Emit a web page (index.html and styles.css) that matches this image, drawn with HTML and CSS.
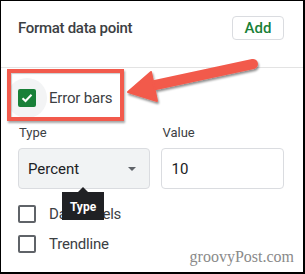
FILE: index.html
```html
<!DOCTYPE html>
<html lang="en">
<head>
    <meta charset="UTF-8">
    <meta name="viewport" content="width=device-width, initial-scale=1.0">
    <title>Format data point</title>
    <link rel="stylesheet" href="styles.css">
</head>
<body>

    <div class="frame">
        <div class="header">
            <span class="title">Format data point</span>
            <button class="add-btn">Add</button>
        </div>
        <div class="divider"></div>

        <div class="panel">
            <label class="check-row first">
                <span class="ripple"></span>
                <span class="box checked">
                    <svg width="12" height="10" viewBox="0 0 12 10"><path d="M1.5 5.2 L4.5 8 L10.5 1.8" fill="none" stroke="#fff" stroke-width="2"/></svg>
                </span>
                <span class="check-text">Error bars</span>
            </label>

            <div class="fields">
                <div class="field">
                    <div class="field-label">Type</div>
                    <div class="select">
                        <span>Percent</span>
                        <span class="caret"></span>
                    </div>
                </div>
                <div class="field value">
                    <div class="field-label">Value</div>
                    <div class="input">10</div>
                </div>
            </div>

            <label class="check-row labels">
                <span class="box"></span>
                <span class="check-text">Data labels</span>
            </label>
            <label class="check-row trend">
                <span class="box"></span>
                <span class="check-text">Trendline</span>
            </label>
        </div>

        <!-- overlays: tooltip, red highlight and arrow -->
        <div class="tooltip">Type</div>
        <div class="highlight"></div>
        <svg class="arrow" width="305" height="274" viewBox="0 0 305 274">
            <defs>
                <filter id="shadow" x="-20%" y="-40%" width="140%" height="180%">
                    <feDropShadow dx="1" dy="2" stdDeviation="1.2" flood-color="#000" flood-opacity="0.45"/>
                </filter>
            </defs>
            <g filter="url(#shadow)" fill="#f25a4c" stroke="#f25a4c">
                <line x1="253" y1="64" x2="146" y2="87" stroke-width="10" stroke-linecap="round"/>
                <polygon points="128,92 151,72 157,101" stroke-width="2" stroke-linejoin="round"/>
            </g>
        </svg>
        <div class="watermark">groovyPost.com</div>
    </div>

</body>
</html>
```

FILE: styles.css
```css
body {
    margin: 0;
    background-color: white;
    font-family: Roboto, "Liberation Sans", Arial, sans-serif;
}

.frame {
    position: relative;
    width: 305px;
    height: 274px;
    box-sizing: border-box;
    border-style: solid;
    border-color: #000;
    border-width: 1px 2px 2px 1px;
    overflow: hidden;
}

.header {
    display: flex;
    align-items: center;
    justify-content: space-between;
    height: 54px;
    padding: 0 19px 0 17px;
}

.title {
    font-size: 15px;
    font-weight: 500;
    letter-spacing: -0.3px;
    color: #3c4043;
}

.add-btn {
    width: 52px;
    height: 24px;
    padding: 0;
    background-color: white;
    border: 1px solid #dadce0;
    border-radius: 4px;
    color: #188038;
    font-family: inherit;
    font-size: 15px;
    font-weight: 500;
}

.divider {
    margin-top: 12px;
    height: 1px;
    background-color: #e3e3e3;
}

.panel {
    padding: 0 19px 0 17px;
}

.check-row {
    position: relative;
    display: flex;
    align-items: center;
    height: 18px;
    gap: 13px;
}

.check-row.first {
    margin-top: 21px;
}

.check-row.labels {
    margin-top: 16px;
}

.check-row.trend {
    margin-top: 12px;
}

.ripple {
    position: absolute;
    left: -11px;
    top: -11px;
    width: 40px;
    height: 40px;
    border-radius: 50%;
    background-color: #f3f4f5;
}

.box {
    position: relative;
    display: flex;
    align-items: center;
    justify-content: center;
    width: 18px;
    height: 18px;
    box-sizing: border-box;
    border: 2px solid #5f6368;
    border-radius: 2px;
}

.box.checked {
    background-color: #188038;
    border-color: #188038;
}

.check-text {
    position: relative;
    font-size: 15px;
    letter-spacing: -0.2px;
    color: #3c4043;
}

.fields {
    display: flex;
    gap: 11px;
    margin-top: 18px;
}

.field {
    width: 133px;
}

.field.value {
    width: 123px;
}

.field-label {
    font-size: 13px;
    line-height: 16px;
    color: #3c4043;
    padding-left: 1px;
}

.select,
.input {
    display: flex;
    align-items: center;
    justify-content: space-between;
    height: 41px;
    margin-top: 7px;
    box-sizing: border-box;
    border: 1px solid #dadce0;
    border-radius: 4px;
    padding: 0 13px 0 9px;
    font-size: 15px;
    color: #202124;
}

.select {
    background-color: #f1f3f4;
}

.caret {
    width: 0;
    height: 0;
    border-left: 4px solid transparent;
    border-right: 4px solid transparent;
    border-top: 4px solid #5f6368;
}

.tooltip {
    position: absolute;
    left: 61px;
    top: 191px;
    width: 42px;
    height: 28px;
    padding-top: 8px;
    box-sizing: border-box;
    background-color: #202124;
    color: white;
    font-size: 12px;
    font-weight: 700;
    line-height: 14px;
    text-align: center;
}

.tooltip::before {
    content: "";
    position: absolute;
    left: 16px;
    top: -5px;
    border-left: 5px solid transparent;
    border-right: 5px solid transparent;
    border-bottom: 5px solid #202124;
}

.highlight {
    position: absolute;
    left: 6px;
    top: 68px;
    width: 117px;
    height: 52px;
    box-sizing: border-box;
    border: 4px solid #f25a4c;
    box-shadow: 1px 2px 2px rgba(0, 0, 0, 0.35), inset 1px 1px 1px rgba(0, 0, 0, 0.2);
}

.arrow {
    position: absolute;
    left: -1px;
    top: -1px;
}

.watermark {
    position: absolute;
    right: 9px;
    bottom: 6px;
    font-family: "Liberation Serif", serif;
    font-size: 16px;
    color: #8a8a8a;
}
```
